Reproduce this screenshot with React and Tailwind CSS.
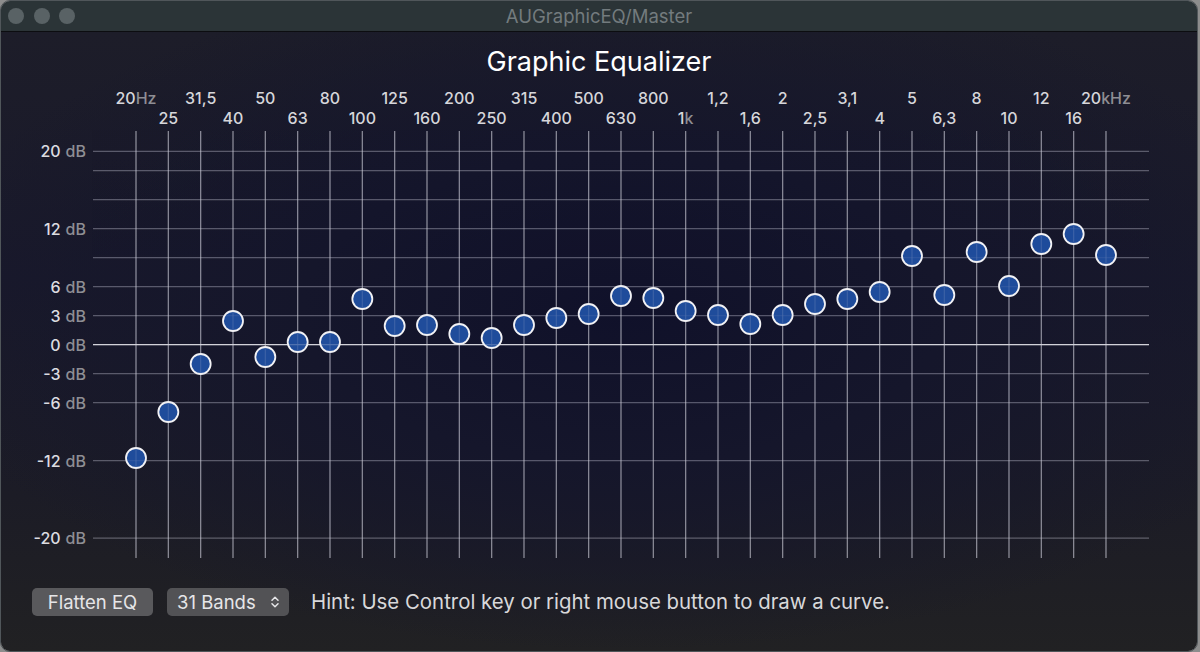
import React from "react";

const FREQS = ["20","25","31,5","40","50","63","80","100","125","160","200","250","315","400","500","630","800","1","1,2","1,6","2","2,5","3,1","4","5","6,3","8","10","12","16","20"];
const SUFFIX = { 0: "Hz", 17: "k", 30: "kHz" };
const KNOBS = [458,412,364,321,357,342,342,299,326,325,334,338,325,318,314,296,298,311,315,324,315,304,299,292,256,295,252,286,244,234,255];
const GRID_DB = [20,18,15,12,9,6,3,0,-3,-6,-12,-20];
const LABEL_DB = [20,12,6,3,0,-3,-6,-12,-20];

const OX = 1; // window border offset
const OY = 78; // svg top in page coords
const colX = (i) => 136 + i * 32.333 - OX;
const dbY = (d) => 344.7 - d * 9.667 - OY;

function Grid({ overlay }) {
  return (
    <g opacity={overlay ? 0.28 : 1}>
      {GRID_DB.map((d) => (
        <line
          key={"h" + d}
          x1={92}
          x2={1148}
          y1={dbY(d)}
          y2={dbY(d)}
          stroke={d === 0 ? "rgba(235,235,240,0.85)" : "rgba(200,200,215,0.32)"}
          strokeWidth={1.2}
        />
      ))}
      {FREQS.map((_, i) => (
        <line
          key={"v" + i}
          x1={colX(i)}
          x2={colX(i)}
          y1={53}
          y2={480}
          stroke="rgba(215,215,225,0.55)"
          strokeWidth={1.2}
        />
      ))}
    </g>
  );
}

function EqChart() {
  return (
    <svg width="1198" height="492" viewBox="0 0 1198 492" className="block">
      {FREQS.map((f, i) => (
        <text
          key={"f" + i}
          x={colX(i)}
          y={i % 2 === 0 ? 26 : 46}
          textAnchor="middle"
          fontSize="16"
          fontWeight="500"
          fill="#d6d6da"
          fontFamily="Inter, 'Noto Sans', sans-serif"
        >
          {f}
          {SUFFIX[i] && <tspan fill="#8e8e94">{SUFFIX[i]}</tspan>}
        </text>
      ))}
      {LABEL_DB.map((d) => (
        <text
          key={"d" + d}
          x={85}
          y={dbY(d) + 6}
          textAnchor="end"
          fontSize="16"
          fontWeight="500"
          fill="#dcdce0"
          fontFamily="Inter, 'Noto Sans', sans-serif"
        >
          {d}
          <tspan fill="#8e8e94" dx="5">dB</tspan>
        </text>
      ))}
      <Grid />
      {KNOBS.map((y, i) => (
        <circle
          key={"k" + i}
          cx={colX(i)}
          cy={y - OY}
          r={10}
          fill="#1f4c9b"
          stroke="#f2f2f5"
          strokeWidth={1.8}
        />
      ))}
      <Grid overlay />
    </svg>
  );
}

export default function App() {
  return (
    <div className="w-[1200px] h-[652px] bg-[#8d8d8d] font-['Inter','Noto_Sans',sans-serif]">
      <div className="w-[1198px] h-[652px] rounded-[10px] overflow-hidden border border-[#50565a] flex flex-col">
        <div className="h-[30px] bg-[#2b3437] grid grid-cols-[1fr_auto_1fr] items-center shrink-0">
          <div className="flex items-center gap-[9.5px] pl-[7px]">
            <span className="w-[16px] h-[16px] rounded-full bg-[#596265]" />
            <span className="w-[16px] h-[16px] rounded-full bg-[#596265]" />
            <span className="w-[16px] h-[16px] rounded-full bg-[#596265]" />
          </div>
          <div className="text-[18.5px] text-[#737b7e] leading-none">AUGraphicEQ/Master</div>
          <div />
        </div>
        <div className="h-px bg-[#0c0d10] shrink-0" />
        <div className="flex-1 flex flex-col bg-[radial-gradient(ellipse_60%_55%_at_52%_45%,#10112a_0%,#15162b_45%,rgba(30,30,36,0)_100%),linear-gradient(to_bottom,#1d1d29_0%,#19192b_40%,#1c1c26_75%,#212123_100%)]">
          <h1 className="mt-[14px] h-[32px] text-center text-[27px] leading-[32px] text-white font-normal">
            Graphic Equalizer
          </h1>
          <EqChart />
          <div className="flex items-center pl-[31px] pt-[17px]">
            <button className="h-[28px] w-[121px] rounded-[5px] bg-[#59595c] text-[18.5px] text-[#e6e6e8] leading-none flex items-center justify-center">
              Flatten EQ
            </button>
            <button className="ml-[14px] h-[28px] w-[122px] pl-[10px] pr-[10px] rounded-[5px] bg-[#525255] text-[18.5px] text-[#e6e6e8] leading-none flex items-center justify-between">
              <span>31 Bands</span>
              <svg width="8" height="12" viewBox="0 0 8 12" fill="none" stroke="#e6e6e8" strokeWidth="1.5" strokeLinecap="round" strokeLinejoin="round">
                <path d="M1 4.2 L4 1.2 L7 4.2" />
                <path d="M1 7.8 L4 10.8 L7 7.8" />
              </svg>
            </button>
            <span className="ml-[22px] text-[20.4px] text-[#d8d8da]">
              Hint: Use Control key or right mouse button to draw a curve.
            </span>
          </div>
        </div>
      </div>
    </div>
  );
}
